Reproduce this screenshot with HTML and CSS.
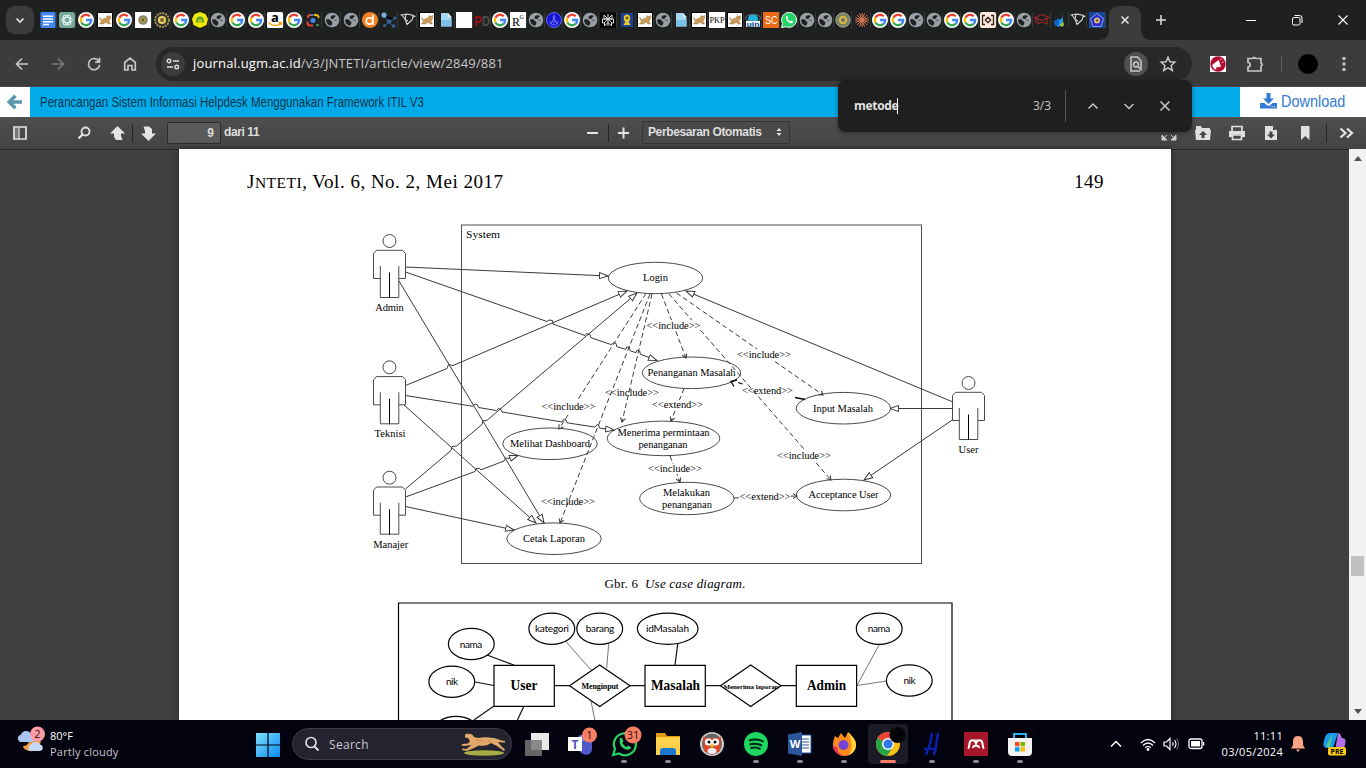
FILE: index.html
```html
<!DOCTYPE html>
<html lang="id">
<head>
<meta charset="utf-8">
<title>Perancangan Sistem Informasi Helpdesk</title>
<link rel="stylesheet" href="styles.css">
</head>
<body>
<svg class="defs" width="0" height="0">
  <defs>
    <symbol id="g" viewBox="0 0 16 16"><circle cx="8" cy="8" r="8" fill="#fff"/><g fill="none" stroke-width="2.300"><path d="M3.400 5.600A5.200 5.200 0 0 1 11.700 4.300" stroke="#ea4335"/><path d="M3.400 10.400A5.200 5.200 0 0 1 3.400 5.600" stroke="#fbbc05"/><path d="M11.500 11.900A5.200 5.200 0 0 1 3.400 10.400" stroke="#34a853"/><path d="M8 8h5.200A5.200 5.200 0 0 1 11.500 11.900" stroke="#4285f4"/></g></symbol>
    <symbol id="globe" viewBox="0 0 16 16"><circle cx="8" cy="8" r="7.300" fill="#9aa0a6"/><path d="M2.200 7.500C4 7 6 7.200 6.600 8.600c.3 1 1.800.7 1.800 2.200 0 1.200-.9 1.500-1 2.900C4 13.500 2 11 2.200 7.500zM6.500 5.500C6.500 3.500 9 2.300 12 3.800c-.2 1.200-1.600 1-1.900 2.200-.4 1.400-3.600 1.300-3.600-.5zM9.500 8.200c1.500-.9 3-.5 4.300.2" fill="#202124"/></symbol>
    <symbol id="cat" viewBox="0 0 16 16"><path d="M.5.500h15v15H.500z" fill="#fff" stroke="#000"/><path d="M2.500 5 4.500 8l2.500-1.500 2.500-.5.500-2.500 1 .800h1.500l1-.8.3 2.700-1.300 1.800-.5 1.500 1.500 2.500h-2.200l-1.800-1.500-2 .5-1 1H2.500l2-2.500L3.500 8z" fill="#c99b55" stroke="#8b6738" stroke-width=".4"/></symbol>
    <symbol id="file" viewBox="0 0 16 16"><path d="M3 1h7l3.500 4v9.500H3z" fill="#a5d6f2"/><path d="M3 8h10.500v6.500H3z" fill="#7cc0e6"/><path d="M10 1v4h3.500z" fill="#e3f4fd"/></symbol>
    <symbol id="bird" viewBox="0 0 16 16"><path d="M.5 3l3.500-.5 3-.5 6.500 1.500L12 8 7 12.500 5.500 8 2 3M6 2.500 5 7.500l3 1.500M13 5l2.500-1" fill="none" stroke="#ddd" stroke-width="1.100"/></symbol>
    <symbol id="docs" viewBox="0 0 16 16"><rect x=".5" width="15" height="16" rx="1.500" fill="#4285f4"/><path d="M3 4.200h10M3 7h10M3 9.700h10M3 12.400h6" stroke="#fff" stroke-width="1.500"/></symbol>
    <symbol id="gpt" viewBox="0 0 16 16"><rect width="16" height="16" rx="2.500" fill="#74aa9c"/><g fill="none" stroke="#e8f3f0" stroke-width=".9"><ellipse cx="8" cy="8" rx="5.400" ry="2.800"/><ellipse cx="8" cy="8" rx="5.400" ry="2.800" transform="rotate(60 8 8)"/><ellipse cx="8" cy="8" rx="5.400" ry="2.800" transform="rotate(120 8 8)"/></g></symbol>
    <symbol id="crest" viewBox="0 0 16 16"><path d="M0 0h16v16H0z" fill="#fff"/><circle cx="8" cy="8" r="4.800" fill="#8a8770"/><circle cx="8" cy="8" r="2.500" fill="#b59a3c"/><circle cx="8" cy="8" r="1" fill="#333"/></symbol>
    <symbol id="seal" viewBox="0 0 16 16"><circle cx="8" cy="8" r="7" fill="#3c382c" stroke="#b9a35c" stroke-width="1.600" stroke-dasharray="2 1"/><circle cx="8" cy="8" r="4" fill="#e9d36d"/><circle cx="8" cy="8" r="2" fill="#7a5c22"/></symbol>
    <symbol id="seal2" viewBox="0 0 16 16"><circle cx="8" cy="8" r="7.200" fill="#76806b" stroke="#a5a798"/><circle cx="8" cy="8" r="4.200" fill="#d6b83d"/><circle cx="8" cy="8" r="2" fill="#6b6d75"/></symbol>
    <symbol id="yellow" viewBox="0 0 16 16"><path d="M8 0l5.500 2L16 7l-1.500 6L8 16l-6.500-3L0 7l2.500-5z" fill="#f3e80b"/><path d="M4 10.500C4 6 6 4.500 8 4.500s4 1.500 4 6z" fill="#4b9b2b"/><path d="M6.500 10V8M8 10V6M9.500 10V8" stroke="#f3e80b"/></symbol>
    <symbol id="amazon" viewBox="0 0 16 16"><rect width="16" height="16" rx="1.500" fill="#fff"/><text x="8" y="9.500" class="fav-a">a</text><path d="M1.500 10.500c4 4 9 4 12.500.8M11.500 10.800l3-.3-.5 2.700" fill="none" stroke="#f90" stroke-width="1.200"/></symbol>
    <symbol id="lens" viewBox="0 0 16 16"><g fill="none" stroke-width="2"><path d="M3 6V5a2 2 0 0 1 2-2h1" stroke="#ea4335"/><path d="M2.500 9.500v1.500a2.500 2.500 0 0 0 2.500 2.500h3" stroke="#ea4335"/><path d="M6 3h2.500" stroke="#4285f4"/><path d="M9 3H11a2.500 2.500 0 0 1 2.500 3" stroke="#fbbc05"/></g><circle cx="8" cy="8.500" r="2.500" fill="#4285f4"/><circle cx="12.500" cy="13" r="1.300" fill="#34a853"/></symbol>
    <symbol id="dd" viewBox="0 0 16 16"><circle cx="8" cy="8" r="8" fill="#f58220"/><circle cx="7.500" cy="9" r="3.200" fill="none" stroke="#fff" stroke-width="1.500"/><path d="M11 2.500v10.500" stroke="#fff" stroke-width="1.500"/></symbol>
    <symbol id="mol" viewBox="0 0 16 16"><path d="M3 3.500l5 6 5.500-3M8 9.500l-4 4M8 9.500l4 4.500" stroke="#35679b" stroke-width="1"/><circle cx="3" cy="3" r="2.600" fill="#7fb0dd"/><circle cx="8" cy="9.500" r="2.300" fill="#35679b"/><circle cx="14" cy="6" r="1.600" fill="#35679b"/><circle cx="3.500" cy="13.500" r="1.500" fill="#35679b"/><circle cx="12.500" cy="14" r="1.700" fill="#35679b"/></symbol>
    <symbol id="white" viewBox="0 0 16 16"><path d="M0 0h16v16H0z" fill="#fff"/></symbol>
    <symbol id="pd" viewBox="0 0 16 16"><text x="0" y="14" class="fav-pd" textLength="8" lengthAdjust="spacingAndGlyphs" fill="#9b0e12">P</text><text x="8" y="14" class="fav-pd" textLength="8" lengthAdjust="spacingAndGlyphs" fill="#4d4d4d">D</text></symbol>
    <symbol id="rg" viewBox="0 0 16 16"><path d="M0 0h16v16H0z" fill="#fff"/><text x="2" y="14" class="fav-r">R</text><text x="9.500" y="7" class="fav-rg">G</text></symbol>
    <symbol id="anchor" viewBox="0 0 16 16"><circle cx="8" cy="8" r="7.500" fill="#1715cf" stroke="#5e6cf0"/><path d="M8 2.500v9M6.500 5h3M4 9c0 3 2 4 4 4s4-1 4-4M5 12l3-6 3 6" fill="none" stroke="#7c8cf5" stroke-width=".8"/></symbol>
    <symbol id="perp" viewBox="0 0 16 16"><path d="M0 0h16v16H0z" fill="#050505"/><path d="M8 2v12M4 3l4 4 4-4v4H4zM2.500 7h11v4H11.500M2.500 7v4H5M8 7l-3.500 3.500V14L8 10.500l3.500 3.500v-3.500z" fill="none" stroke="#ddd"/></symbol>
    <symbol id="scout" viewBox="0 0 16 16"><path d="M2 1h12v14H2z" fill="#1f3f9a"/><path d="M8 2.500c4 0 4 6 1.500 7l2 3.500h-7l2-3.500C4 8.500 4 2.500 8 2.500z" fill="#e8ce27"/><circle cx="8" cy="6" r="1.500" fill="#705415"/></symbol>
    <symbol id="pkp" viewBox="0 0 16 16"><path d="M0 0h16v16H0z" fill="#fff"/><text x=".5" y="10.500" class="fav-pkp" textLength="15" lengthAdjust="spacingAndGlyphs">PKP</text></symbol>
    <symbol id="uin" viewBox="0 0 16 16"><circle cx="8" cy="7" r="5" fill="#20b4dc"/><ellipse cx="8" cy="6" rx="7.500" ry="3.500" fill="none" stroke="#627179"/><path d="M1 9h14v6H1z" fill="#e9f6fb"/><text x="1.500" y="14.500" class="fav-uin" textLength="13" lengthAdjust="spacingAndGlyphs">uin</text></symbol>
    <symbol id="sc" viewBox="0 0 16 16"><path d="M0 0h16v16H0z" fill="#ec6a15"/><text x="2" y="12" class="fav-sc" textLength="12.500" lengthAdjust="spacingAndGlyphs">SC</text></symbol>
    <symbol id="wa" viewBox="0 0 16 16"><path d="M.5 15.500l1-4A7.500 7.500 0 1 1 5 14.700z" fill="#25d366" stroke="#fff"/><path d="M5 4l1.200-.2.900 2-.7 1c.7 1.200 1.500 2 2.800 2.600l1-.9 1.900 1-.1 1.100C10 13 4 9 5 4z" fill="#fff"/></symbol>
    <symbol id="claude" viewBox="0 0 16 16"><path d="M8 1v14M1 8h14M3 3l10 10M13 3 3 13M5.500 1.500l5 13M10.500 1.500l-5 13M1.500 5.500l13 5M1.500 10.500l13-5" stroke="#d97757" stroke-width="1"/></symbol>
    <symbol id="brk" viewBox="0 0 16 16"><rect width="16" height="16" rx="2" fill="#fbeadd"/><path d="M5 3.500H2.500v9H5M11 3.500h2.500v9H11M8 5.300l2.700 2.700L8 10.700 5.300 8z" fill="none" stroke="#35201c" stroke-width="1.300"/></symbol>
    <symbol id="cap" viewBox="0 0 16 16"><path d="M1 5.500 8 2.500l7 3-7 3zM4 7.500V12c3-2 6-2 9 0V7M1.500 6v5" fill="none" stroke="#a1292e" stroke-width="1.100"/></symbol>
    <symbol id="flame" viewBox="0 0 16 16"><path d="M10 0v6L3 11l3 4c4-1 5-4 5-6z" fill="#1aa0ea"/><path d="M2 9l5-3v7l-4 1z" fill="#1461c7"/><path d="M8 13l3-4 1 4-2 2z" fill="#a7c83b"/></symbol>
    <symbol id="penta" viewBox="0 0 16 16"><path d="M0 0h16v16H0z" fill="#15489c"/><path d="M8 1.500 14.500 6.500 12 14.500H4L1.500 6.500z" fill="#2b28d8" stroke="#b7b6de" stroke-width=".8"/><circle cx="8" cy="8.500" r="3" fill="#d9c66e"/><circle cx="8" cy="8.500" r="1.300" fill="#8c4b35"/></symbol>
    <g id="actor" fill="none" stroke="#4a4a4a" stroke-width="1"><circle cx="389.500" cy="241" r="6.500"/><path d="M380 278.500h-6.500V253.500l3-3.200h26l3 3.200v25H399M380.300 266v31.500h18.500V266"/><path d="M389.500 272.500V298" stroke="#000"/></g>
    <marker id="tri" markerUnits="userSpaceOnUse" markerWidth="12" markerHeight="10" refX="9" refY="4" orient="auto"><path d="M.5 1v6L9 4z" fill="#fff" stroke="#3a3a3a" stroke-width="1"/></marker>
    <marker id="open" markerUnits="userSpaceOnUse" markerWidth="8" markerHeight="8" refX="5" refY="3" orient="auto"><path d="M1 .5 5 3 1 5.500" fill="none" stroke="#3a3a3a"/></marker>
  </defs>
</svg>

<header class="tabs">
  <div class="tab-search"><svg width="10" height="7" viewBox="0 0 10 7"><path d="M1.500 1.500 5 5l3.500-3.500" fill="none" stroke="#e3e3e3" stroke-width="1.600"/></svg></div>
  <div class="favs favs-a">
    <svg><use href="#docs"/></svg><svg><use href="#gpt"/></svg><svg><use href="#g"/></svg><svg><use href="#cat"/></svg><svg><use href="#g"/></svg><svg><use href="#crest"/></svg><svg><use href="#seal"/></svg><svg><use href="#g"/></svg><svg><use href="#yellow"/></svg><svg><use href="#globe"/></svg><svg><use href="#g"/></svg><svg><use href="#g"/></svg><svg><use href="#amazon"/></svg><svg><use href="#g"/></svg><svg><use href="#lens"/></svg><svg><use href="#globe"/></svg><svg><use href="#globe"/></svg><svg><use href="#dd"/></svg><svg><use href="#mol"/></svg><svg><use href="#bird"/></svg><svg><use href="#cat"/></svg>
  </div>
  <div class="favs favs-b">
    <svg><use href="#file"/></svg><svg><use href="#white"/></svg><svg><use href="#pd"/></svg><svg><use href="#g"/></svg><svg><use href="#rg"/></svg><svg><use href="#globe"/></svg><svg><use href="#anchor"/></svg><svg><use href="#g"/></svg><svg><use href="#globe"/></svg><svg><use href="#perp"/></svg><svg><use href="#scout"/></svg><svg><use href="#cat"/></svg><svg><use href="#globe"/></svg><svg><use href="#file"/></svg><svg><use href="#cat"/></svg><svg><use href="#pkp"/></svg><svg><use href="#cat"/></svg><svg><use href="#uin"/></svg><svg><use href="#sc"/></svg><svg><use href="#wa"/></svg><svg><use href="#globe"/></svg><svg><use href="#globe"/></svg><svg><use href="#seal2"/></svg><svg><use href="#claude"/></svg><svg><use href="#g"/></svg><svg><use href="#g"/></svg><svg><use href="#globe"/></svg><svg><use href="#globe"/></svg><svg><use href="#g"/></svg><svg><use href="#g"/></svg><svg><use href="#brk"/></svg><svg><use href="#g"/></svg><svg><use href="#globe"/></svg><svg><use href="#cap"/></svg><svg><use href="#flame"/></svg><svg><use href="#bird"/></svg><svg><use href="#penta"/></svg>
  </div>
  <svg class="active-tab" width="52" height="34" viewBox="0 0 52 34"><path d="M0 34c6 0 10-4 10-10V10C10 4 14 0 20 0h12c6 0 10 4 10 10v14c0 6 4 10 10 10z" fill="#3c3c3c"/><path d="M22.500 10.500l7 7m0-7-7 7" stroke="#e8e8e8" stroke-width="1.500"/></svg>
  <svg class="new-tab" width="12" height="12"><path d="M6 1v10M1 6h10" stroke="#ddd" stroke-width="1.500"/></svg>
  <div class="win">
    <svg width="12" height="12"><path d="M1 6.500h10" stroke="#fff"/></svg>
    <svg width="12" height="12"><rect x="1.500" y="3.500" width="7.500" height="7.500" rx="1.500" fill="none" stroke="#fff"/><path d="M3.500 1.500h5a2.500 2.500 0 0 1 2.500 2.500v5" fill="none" stroke="#fff"/></svg>
    <svg width="12" height="12"><path d="M1.500 1.500l9 9m0-9-9 9" stroke="#fff" stroke-width="1.100"/></svg>
  </div>
</header>

<div class="chrome">
  <div class="nav">
    <svg viewBox="0 0 16 16"><path d="M14 8H3M8 2.500 2.500 8 8 13.500" stroke="#c7c7c7"/></svg>
    <svg viewBox="0 0 16 16"><path d="M2 8h11M8 2.500 13.500 8 8 13.500" stroke="#7a7a7a"/></svg>
    <svg viewBox="0 0 16 16"><path d="M13 5.500A5.600 5.600 0 1 0 13.600 8.800M13.500 1.800v4.400H9.200" stroke="#c7c7c7"/></svg>
    <svg viewBox="0 0 16 16"><path d="M2.700 14V6.500L8 2.200l5.300 4.300V14H10V9.500H6V14z" stroke="#c7c7c7"/></svg>
  </div>
  <div class="omnibox">
    <span class="round"><svg width="14" height="14" viewBox="0 0 14 14"><path d="M7 4h6M1 10h6" stroke="#ddd" stroke-width="1.500"/><circle cx="3" cy="4" r="1.800" fill="none" stroke="#ddd" stroke-width="1.400"/><circle cx="10.700" cy="10" r="1.800" fill="none" stroke="#ddd" stroke-width="1.400"/></svg></span>
    <span class="url"><b>journal.ugm.ac.id</b>/v3/JNTETI/article/view/2849/881</span>
    <span class="round round-find"><svg width="16" height="18" viewBox="0 0 16 18"><path d="M13 15.500V6L9.500 2H3v14h9" fill="none" stroke="#c7c7c7" stroke-width="1.500"/><circle cx="8" cy="9.500" r="2.500" fill="none" stroke="#c7c7c7" stroke-width="1.400"/><path d="M10 11.500l3 3" stroke="#c7c7c7" stroke-width="1.400"/></svg></span>
    <svg class="star" width="16" height="16" viewBox="0 0 16 16"><path d="M8 1.200l1.900 4.600 5 .4-3.800 3.300 1.200 4.900L8 11.800l-4.300 2.600 1.200-4.900L1.100 6.200l5-.4z" fill="none" stroke="#c7c7c7" stroke-width="1.500"/></svg>
  </div>
  <svg class="ext" width="16" height="16"><path d="M0 0h16v16H0z" fill="#fff"/><circle cx="8" cy="8" r="7.700" fill="#b30d34"/><path d="M2.500 9 8.500 4.500l2 6-5 .5.500 2H4.500zM10.500 4l1-1.500M12 6.500l1.500-.5" fill="#fff" stroke="#fff" stroke-width=".8"/></svg>
  <svg class="puzzle" width="18" height="18" viewBox="0 0 18 18"><path d="M2 3.500h4.500a1.700 1.700 0 0 1 3 0H15V8a1.700 1.700 0 0 1 0 3.200V16H2v-4c3 0 3-4.500 0-4.500z" fill="none" stroke="#c7c7c7" stroke-width="1.700"/></svg>
  <i class="vsep"></i><i class="avatar"></i>
  <svg class="dots" width="4" height="16"><g fill="#c7c7c7"><circle cx="2" cy="2.500" r="1.700"/><circle cx="2" cy="8" r="1.700"/><circle cx="2" cy="13.500" r="1.700"/></g></svg>
</div>

<div class="find">
  <span class="find-q">metode</span><i class="caret"></i><span class="find-n">3/3</span><i class="find-sep"></i>
  <svg width="12" height="12"><path d="M1.500 8.500 6 4l4.500 4.500" /></svg>
  <svg width="12" height="12"><path d="M1.500 4 6 8.500 10.500 4"/></svg>
  <svg width="12" height="12"><path d="M1.500 1.500l9 9m0-9-9 9"/></svg>
</div>

<div class="article">
  <div class="art-back"><svg width="18" height="16" viewBox="0 0 18 16"><path d="M16 8H4M9.500 1.800 3.200 8l6.300 6.200" fill="none" stroke="#5a97ad" stroke-width="3.400"/></svg></div>
  <div class="art-title"><span>Perancangan Sistem Informasi Helpdesk Menggunakan Framework ITIL V3</span></div>
  <div class="art-dl"><svg width="17" height="16" viewBox="0 0 17 16"><path d="M6.500 0h4v5.500h3.500l-5.500 5.500L3 5.500h3.500z" fill="#337bd8"/><path d="M0 10h4.500l3 2.700h2l3-2.700H17v5.500H0z" fill="#337bd8"/><path d="M11.500 13.700h1M14 13.700h1" stroke="#fff"/></svg><span>Download</span></div>
</div>

<div class="pdfbar">
  <svg class="p-side" width="14" height="14"><path d="M1 1h12v12H1z" fill="none" stroke="#e4e4e4" stroke-width="1.700"/><path d="M2 2h3.500v10H2z" fill="#777"/><path d="M6 1v12" stroke="#e4e4e4" stroke-width="1.200"/></svg>
  <svg class="p-search" width="14" height="14"><circle cx="8.500" cy="5.500" r="4" fill="none" stroke="#e4e4e4" stroke-width="1.800"/><path d="M5.500 8.500 1.500 12.500" stroke="#e4e4e4" stroke-width="2.400"/></svg>
  <svg class="p-up" width="15" height="15"><path d="M7.500 0 15 7.500h-4V10l1.500 4H6L4 11V7.500H0z" fill="#e4e4e4"/></svg>
  <i class="p-sep p-sep1"></i>
  <svg class="p-down" width="15" height="15"><path d="M7.500 15 0 7.500h4V5L2.500.500H8L11 3v4.500h4z" fill="#e4e4e4"/></svg>
  <div class="page-no">9</div><span class="page-of">dari 11</span>
  <svg class="p-minus" width="11" height="12"><path d="M0 6h11" stroke="#e4e4e4" stroke-width="2"/></svg>
  <i class="p-sep p-sep2"></i>
  <svg class="p-plus" width="11" height="12"><path d="M0 6h11M5.500 .5v11" stroke="#e4e4e4" stroke-width="2"/></svg>
  <div class="zoom"><span>Perbesaran Otomatis</span><svg width="6" height="8"><path d="M3 0l2.500 3h-5zM3 8 .5 5h5z" fill="#e4e4e4"/></svg></div>
  <div class="p-right">
    <svg width="16" height="16"><path d="M1 15v-5l5 5zM15 15v-5l-5 5zM2.500 13.500 6 10M13.500 13.500 10 10" fill="#ccc" stroke="#ccc"/></svg>
    <svg width="16" height="16"><path d="M1 1h5l1 2h8v3H1zM0 5h16l-1 10H1z" fill="#e0e0e0"/><path d="M8 6l4 4H9.500v3h-3v-3H4z" fill="#444"/></svg>
    <svg width="16" height="16"><path d="M3 6V1.500h10V6M3.500 10h9v4.500h-9z" fill="none" stroke="#e0e0e0" stroke-width="1.700"/><path d="M0 6h16v6h-3V9.500H3V12H0z" fill="#e0e0e0"/></svg>
    <svg width="16" height="16"><path d="M2 1h8l4 4v10H2z" fill="#e0e0e0"/><path d="M10 1v4h4M8 13.500 4 9.500h2.500v-3h3v3H12z" fill="#444"/></svg>
    <svg width="16" height="16"><path d="M4 1h8.500v14L8.200 11 4 15z" fill="#e0e0e0"/></svg>
  </div>
  <i class="p-sep p-sep3"></i>
  <svg class="p-more" width="15" height="12"><path d="M1.500 1.500 6.500 6l-5 4.500M8 1.500 13 6l-5 4.500" fill="none" stroke="#e4e4e4" stroke-width="2.200"/></svg>
</div>

<main class="viewer">
  <section class="paper">
    <div class="run-head"><span class="journal">J<small>NTETI</small>, Vol. 6, No. 2, Mei 2017</span><span class="folio">149</span></div>
    <svg class="usecase" width="992" height="370" viewBox="179 205 992 370">
      <rect x="461.500" y="225" width="460" height="338.500" fill="none" stroke="#4d4d4d"/>
      <g fill="#fff" stroke="#4a4a4a">
        <ellipse cx="655.500" cy="278" rx="47.200" ry="15.700"/><ellipse cx="691.500" cy="372.800" rx="49.200" ry="15.800"/><ellipse cx="663.500" cy="438.400" rx="56.300" ry="17.300"/><ellipse cx="843.400" cy="408.200" rx="47.200" ry="15.800"/><ellipse cx="686.800" cy="498.500" rx="47.200" ry="16.200"/><ellipse cx="843.500" cy="495" rx="47.200" ry="15.800"/><ellipse cx="550" cy="443.800" rx="47.200" ry="15.800"/><ellipse cx="554" cy="538.700" rx="47.200" ry="15.800"/>
      </g>
      <use href="#actor"/><use href="#actor" y="126.300"/><use href="#actor" y="236.700"/><use href="#actor" x="579" y="142"/>
      <g class="dash">
        <path d="M646 293.500 559 429"/><path d="M650 294 560 523"/><path d="M652 294 622 422"/><path d="M661.500 294 686 358"/><path d="M669 294 831 480"/><path d="M676.500 293 823 395"/><path d="M684 388.500 671 421"/><path d="M670 456 680 482"/><path d="M734 498 797 496"/>
      </g>
      <path d="M805 399.500 795 397.500M742.500 384 738 382.500M737 380 731 381.500 734 386.500" fill="none" stroke="#000" stroke-width="1.300"/>
      <g class="solid">
        <path d="M405.500 267 608 276"/>
        <path d="M405.500 272 547 321.500l2-1.500 3.500.5.500 3.500L585 335.500l1.500-2 3.500 1 .8 3.200 20.700 7 2-2 2.500.7.800 3.300 9 2.700 1-2.500 2.700.500.500 3.300 6 2 1-2.500 2.800 1 .5 3L657 360.500"/>
        <path d="M399 281 544 523"/><path d="M405.500 385.500 447 368.500l1.500-4 4.500 1L627 291"/>
        <path d="M405.500 395.500l67.500 10.800 2-2.300 2.500 1 1 2.500 18 3 2-2 2.500 1 1 2.500L562 422l1.500-2.500 2.500.500 1 2.800 28 4.300 2-2.500 2 1 .5 2.500L614 430"/>
        <path d="M405.500 489 451 450.500l1-4 4.500-.5L482 424.500l1-3.500 4-.7L637 293"/>
        <path d="M405.500 497 475 471.500l1-3 3-.2 2 1.500L504 461l1.500-3 4 .5L518 455.500"/>
        <path d="M404 405 536 523"/><path d="M405.500 506.500 514 530"/>
        <path d="M953 402 686 291"/><path d="M953 408.500H890"/><path d="M953 419.500 864 480"/>
      </g>
      <g fill="#fff"><path d="M646 320h54v11h-54zM738 349h53v11h-53zM542 401h53v11h-53zM652 400h51v10h-51zM777 450h54v11h-54zM648 464h54v10h-54zM739 491h52v11h-52z"/></g>
      <g class="lbl">
        <text x="673.500" y="329" textLength="54">&lt;&lt;include&gt;&gt;</text><text x="764" y="358" textLength="54">&lt;&lt;include&gt;&gt;</text><text x="568.500" y="410" textLength="54">&lt;&lt;include&gt;&gt;</text><text x="632" y="396" textLength="54">&lt;&lt;include&gt;&gt;</text><text x="568" y="505" textLength="54">&lt;&lt;include&gt;&gt;</text><text x="804" y="459" textLength="54">&lt;&lt;include&gt;&gt;</text><text x="675" y="472" textLength="54">&lt;&lt;include&gt;&gt;</text><text x="767.500" y="394" textLength="51">&lt;&lt;extend&gt;&gt;</text><text x="677.500" y="408" textLength="51">&lt;&lt;extend&gt;&gt;</text><text x="765" y="500" textLength="51">&lt;&lt;extend&gt;&gt;</text>
        <text x="483" y="238" textLength="34" lengthAdjust="spacingAndGlyphs">System</text><text x="655.500" y="281" textLength="25">Login</text><text x="691.500" y="376" textLength="88">Penanganan Masalah</text><text x="663.500" y="435.500" textLength="92">Menerima permintaan</text><text x="663" y="448" textLength="49">penanganan</text><text x="843" y="411.500" textLength="60">Input Masalah</text><text x="686.500" y="496" textLength="47">Melakukan</text><text x="687" y="508" textLength="50">penanganan</text><text x="843.500" y="498" textLength="70">Acceptance User</text><text x="550" y="447" textLength="80">Melihat Dashboard</text><text x="554" y="542" textLength="62">Cetak Laporan</text>
        <text x="389.500" y="311" textLength="28.500">Admin</text><text x="390" y="437" textLength="31">Teknisi</text><text x="390.700" y="548" textLength="35">Manajer</text><text x="968.500" y="453" textLength="20">User</text>
      </g>
    </svg>
    <div class="caption">Gbr. 6&nbsp; <em>Use case diagram</em>.</div>
    <svg class="erd" width="992" height="122" viewBox="179 598 992 122">
      <g stroke="#111" stroke-width="1.200"><path d="M487 655 514 665M475 682 494 685.500M494 706 474 720M524 706 517 721M677.700 644 675 665M554 685.700H570M630 685.700H645M705 685.700H721M781 685.700H796"/></g>
      <g stroke="#777"><path d="M565.500 641 591 670M608.700 644 606.700 668M591 701 595 721M879 645 857 685.500 886.500 681" fill="none"/></g>
      <g fill="#fff" stroke="#000" stroke-width="1.200">
        <path d="M398.500 740V603H952V740" fill="none"/>
        <ellipse cx="471.300" cy="644" rx="22.900" ry="15.600"/><ellipse cx="451.800" cy="681.700" rx="22.900" ry="15.600"/><ellipse cx="551.800" cy="628.700" rx="22.900" ry="15.600"/><ellipse cx="599.700" cy="628.700" rx="22.900" ry="15.600"/><ellipse cx="667.700" cy="628.700" rx="30.300" ry="15.600"/><ellipse cx="879.200" cy="628.700" rx="22.900" ry="15.600"/><ellipse cx="909.300" cy="680.500" rx="22.900" ry="15.600"/><ellipse cx="456" cy="732" rx="22.900" ry="15.600"/>
        <path d="M494 665.300h60.300v41H494zM645 665.300h60.300v41H645zM796.300 665.300h60.300v41h-60.300zM569.500 685.700 599.700 665l30.300 20.700-30.300 20.700zM720.500 685.700 750.700 665 781 685.700l-30.300 20.700z"/>
      </g>
      <g class="attr"><text x="471" y="647.500" textLength="22.500">nama</text><text x="452" y="685" textLength="12">nik</text><text x="552" y="632" textLength="34">kategori</text><text x="600" y="632" textLength="28.500">barang</text><text x="667.500" y="632" textLength="43">idMasalah</text><text x="879" y="632" textLength="22.500">nama</text><text x="909.500" y="684" textLength="12">nik</text></g>
      <g class="ent"><text x="524" y="690" textLength="27" lengthAdjust="spacingAndGlyphs">User</text><text x="675.500" y="690" textLength="49" lengthAdjust="spacingAndGlyphs">Masalah</text><text x="826.500" y="690" textLength="39" lengthAdjust="spacingAndGlyphs">Admin</text></g>
      <g class="rel"><text x="600" y="688.500" textLength="37">Menginput</text><text x="751" y="688.500" textLength="55" class="rel-s">Menerima laporan</text></g>
    </svg>
  </section>
  <div class="scroll"><svg width="8" height="5"><path d="M4 0l4 5H0z" fill="#505050"/></svg><i></i><svg width="8" height="5"><path d="M4 5l4-5H0z" fill="#505050"/></svg></div>
</main>

<footer class="taskbar">
  <div class="weather">
    <svg width="28" height="32" viewBox="0 0 28 32"><path d="M12 10c3 6 8 4 12 4 0 9-6 13-12 12-4-1-6-3-6-5 5 0 8-5 6-11z" fill="#f19a3c"/><path d="M3 17a4 4 0 0 1 1-7.500A5.500 5.500 0 0 1 14 9a4 4 0 0 1 0 8z" fill="#a9c4f2"/><path d="M13 26a3.500 3.500 0 0 1 1-6.500 5 5 0 0 1 9 0 3.300 3.300 0 0 1 0 6.500z" fill="#c5d8f8"/><circle cx="20.500" cy="9" r="7.500" fill="#ff9ba5"/><text x="20.500" y="13" class="badge">2</text></svg>
    <div><div class="w-t">80°F</div><div class="w-s">Partly cloudy</div></div>
  </div>
  <svg class="start" width="24" height="24"><defs><linearGradient id="win" x1="0" y1="0" x2="1" y2="1"><stop stop-color="#7be0ff"/><stop offset="1" stop-color="#0d8cf0"/></linearGradient></defs><path d="M0 0h11.400v11.400H0zM12.600 0H24v11.400H12.600zM0 12.600h11.400V24H0zM12.600 12.600H24V24H12.600z" fill="url(#win)"/></svg>
  <div class="search">
    <svg width="16" height="16"><circle cx="7" cy="6.500" r="5" fill="none" stroke="#ddd" stroke-width="1.700"/><path d="M10.500 10.500l4 4" stroke="#ddd" stroke-width="2"/></svg>
    <span>Search</span>
    <svg width="46" height="24" viewBox="0 0 46 24"><ellipse cx="24" cy="21" rx="20" ry="2.800" fill="#a5ad42"/><path d="M5 4c0-3 2-3 3-2 3-1 5 1 6 3l4 1c5-1 10-1 15 0 4 0 7 3 12 3v1.500c-4 0-6-.5-7-.5l3 4 4 3.500-1 1.500-7-5-6-3c-4 3-8 3-12 2.500l-5 2.500-7 3-5-1 .500-1.500 4 .5 5-4-7 1-3-.5.500-1.500 6-.5 2-2.500-2-3-3-.5z" fill="#e3a96a"/><path d="M17 8l2 1 3-1 3 2 4-1 4 2" stroke="#99602f" stroke-dasharray="1 2" fill="none"/></svg>
  </div>
  <div class="apps">
    <div class="app"><svg><path d="M7 1h18v17H7z" fill="#e8e8e8"/><path d="M1 8h17v16H1z" fill="#777" opacity=".85"/></svg></div>
    <div class="app"><svg><circle cx="14" cy="7" r="4" fill="#7b83eb"/><path d="M9 9h15v8c0 7-10 8-13 1z" fill="#5059c9"/><path d="M0 5h14v14H0z" fill="#fff"/><text x="7" y="16.500" class="a-t">T</text><circle cx="21.500" cy="3" r="7.500" fill="#f87f64"/><text x="21.500" y="7" class="badge">1</text></svg></div>
    <div class="app run"><svg><path d="M1 23l2-6A11 11 0 1 1 7 21.500z" fill="#03020f" stroke="#27d366" stroke-width="2.200"/><path d="M8 6l2 0 1.500 3-1 2c1 2 2.500 3 4 4l1.500-1.500 3 1.500c0 6-14 2-11-9z" fill="#27d366"/><circle cx="21" cy="3" r="8.500" fill="#f87f64"/><text x="21" y="7" class="badge">31</text></svg></div>
    <div class="app run"><svg><path d="M0 1h9l2 3h13v18H0z" fill="#e09a0c"/><path d="M0 5h24v18H0z" fill="#ffd04c"/><path d="M4 23v-4q0-3 3-3h10q3 0 3 3v4z" fill="#1b78d0"/></svg></div>
    <div class="app"><svg><ellipse cx="12" cy="12" rx="12" ry="12" fill="#cfcfcf"/><ellipse cx="12" cy="12" rx="10" ry="10.500" fill="#666"/><path d="M3 5l5 1h8l5-1-1 14-8 4-8-4z" fill="#d84a2b"/><circle cx="8.500" cy="10" r="3.600" fill="#fff"/><circle cx="15.500" cy="10" r="3.600" fill="#fff"/><circle cx="9" cy="10" r="1.500"/><circle cx="15" cy="10" r="1.500"/><path d="M12 11l2 3-2 2-2-2z" fill="#f4ba36"/><ellipse cx="12" cy="19" rx="4.500" ry="3" fill="#eee"/></svg></div>
    <div class="app run"><svg><circle cx="12" cy="12" r="12" fill="#1ed760"/><path d="M5 8.500q8-2.500 14.500 1.200M5.500 12.500q7-2 12.500 1.200M6.500 16.200q6-1.700 10 1" fill="none" stroke="#06240f" stroke-width="2"/></svg></div>
    <div class="app run"><svg><path d="M12 3h11v18H12z" fill="#fff" stroke="#2b5797"/><path d="M14 7h7M14 10h7M14 13h7M14 16h7" stroke="#2b5797"/><path d="M0 2.500 14 0v24L0 21.500z" fill="#2b579a"/><text x="7" y="16" class="a-w">W</text></svg></div>
    <div class="app run"><svg><path d="M3 4l3 2 3-5 4 5 3-6c5 5 8 8 8 13a11.500 11 0 0 1-23 0c0-4 1-6 2-9z" fill="#ff8a1c"/><path d="M16 0c5 5 8 8 8 13a11.500 11 0 0 1-7 10c5-8 2-16-1-23z" fill="#ffd438"/><path d="M1 14c1 8 8 10 12 10-6-1-8-5-8-9z" fill="#f1285f"/><circle cx="11.500" cy="13" r="5" fill="#7542d8"/></svg></div>
    <div class="app run active"><svg><circle cx="12" cy="12" r="12" fill="#fbc116"/><path d="M12 12 1.600 6A12 12 0 0 1 22.400 6z" fill="#ea4335"/><path d="M1.600 6A12 12 0 0 0 11 24l6-9-5-3z" fill="#27a348"/><circle cx="12" cy="12" r="6" fill="#fff"/><circle cx="12" cy="12" r="4.600" fill="#2e78e8"/><circle cx="21.500" cy="3" r="8" fill="#050507"/></svg></div>
    <div class="app run"><svg><path d="M12 1c-1 9-2 13-6 22M18 1c-1 9-2 13-4 22M4 17h13" fill="none" stroke="#0b1fae" stroke-width="2.400"/></svg></div>
    <div class="app run"><svg><path d="M0 0h24v24H0z" fill="#a8162c"/><path d="M4 16.500c2.500-2 0-7 3.500-8S12 11 12 11s1-3.500 4.500-2.500 1 6 3.500 8M9 16q0-2.500 3-2.500t3 2.500" fill="none" stroke="#fff" stroke-width="2"/><circle cx="12" cy="9.500" r="2" fill="#fff"/></svg></div>
    <div class="app run"><svg><path d="M6 7V2h12v5" fill="none" stroke="#28b3ed" stroke-width="2"/><path d="M0 6h24v14q0 4-4 4H4q-4 0-4-4z" fill="#f2f2f2"/><path d="M7 10h4.500v4.300H7z" fill="#f25022"/><path d="M12.500 10H17v4.300h-4.500z" fill="#7fba00"/><path d="M7 15.200h4.500v4.300H7z" fill="#00a4ef"/><path d="M12.500 15.200H17v4.300h-4.500z" fill="#ffb900"/></svg></div>
  </div>
  <div class="tray">
    <svg class="t-up" width="12" height="8"><path d="M1 6.500 6 1.500l5 5" fill="none" stroke="#fff" stroke-width="1.500"/></svg>
    <svg class="t-wifi" width="16" height="13"><path d="M1 5Q8-2 15 5M3 7.500q5-5 10 0M5.200 9.700q2.800-2.800 5.600 0" fill="none" stroke="#fff" stroke-width="1.300"/><circle cx="8" cy="11.500" r="1.400" fill="#fff"/></svg>
    <svg class="t-vol" width="16" height="14"><path d="M1 5h2.500L7 1.500v11L3.500 9H1z" fill="none" stroke="#fff" stroke-width="1.200"/><path d="M9.500 5q1.500 2 0 4M11.500 3q3 4 0 8" fill="none" stroke="#fff" stroke-width="1.200"/><path d="M13.500 1.500q4 5.500 0 11" fill="none" stroke="#777"/></svg>
    <svg class="t-bat" width="17" height="12"><rect x="1" y="1" width="13" height="9.500" rx="2" fill="none" stroke="#fff" stroke-width="1.300"/><path d="M3 3h9v5.500H3z" fill="#fff"/><path d="M15.500 4v3.500" stroke="#fff" stroke-width="1.500"/></svg>
    <div class="clock"><div>11:11</div><div>03/05/2024</div></div>
    <svg class="t-bell" width="14" height="16"><path d="M7 0c4 0 5 3 5 6v3l2 3.500H0L2 9V6c0-3 1-6 5-6zM5 13.500h4L7 16z" fill="#ffa487"/></svg>
    <svg class="t-cop" width="24" height="24"><path d="M7 1h8l-5 15H4c-4 0-4-4-3-7 1-4 2-8 6-8z" fill="#1a9bea"/><path d="M3 14 9 2l-2 14z" fill="#53c987"/><path d="M15 1c3 0 3 4 4 5 4 0 4 3 3 7l-2 6h-8z" fill="#b46de8"/><rect x="5" y="15" width="18" height="8.500" rx="2" fill="#ffca16"/><text x="14" y="22" class="pre">PRE</text></svg>
  </div>
</footer>
</body>
</html>
```
FILE: styles.css
```css
* { box-sizing: border-box; }
body { margin: 0; width: 1366px; height: 768px; overflow: hidden; position: relative; background: #404040; font-family: "Open Sans", "Noto Sans", sans-serif; display: flex; flex-direction: column; }
svg { display: block; flex: none; overflow: visible; }
.defs { position: absolute; }
i { display: block; flex: none; }

/* tab strip */
.tabs { height: 40px; flex: none; background: #1f2120; display: flex; align-items: center; }
.tab-search { width: 28px; height: 28px; margin-left: 6px; border-radius: 9px; background: #3c3c3c; display: flex; align-items: center; justify-content: center; }
.favs { display: flex; flex: none; }
.favs svg { width: 16px; height: 16px; box-shadow: 1px 0 #353636; }
.favs-a { gap: 2.95px; margin-left: 6px; }
.favs-b { gap: 2.080px; margin-left: 3px; }
.fav-a { font: bold 13px "Open Sans", sans-serif; text-anchor: middle; }
.fav-pd { font: bold 15px "Liberation Sans", sans-serif; }
.fav-r { font: 12px "Liberation Serif", serif; }
.fav-rg { font: 6px "Liberation Serif", serif; }
.fav-pkp { font: 8px "Liberation Serif", serif; }
.fav-uin { font: bold 8px "Liberation Sans", sans-serif; fill: #0e4d8e; }
.fav-sc { font: 10px "Liberation Sans", sans-serif; fill: #fff; }
.active-tab { margin: 6px 0 0 -6px; }
.new-tab { margin-left: 4px; }
.win { display: flex; gap: 34px; margin-left: 78px; }

/* browser toolbar */
.chrome { height: 47px; flex: none; background: #3c3c3c; display: flex; align-items: center; box-shadow: inset 0 -1px #484848; }
.nav { display: flex; gap: 20px; margin-left: 14px; flex: none; }
.nav svg { width: 16px; height: 16px; fill: none; stroke-width: 1.700; }
.omnibox { width: 1036px; height: 34px; margin-left: 18px; border-radius: 17px; background: #282828; display: flex; align-items: center; flex: none; }
.round { width: 24px; height: 24px; border-radius: 50%; background: #3c3c3c; margin-left: 5px; display: flex; align-items: center; justify-content: center; flex: none; }
.url { width: 930px; margin: -2px 0 0 8px; font-size: 13px; color: #c7c7c7; white-space: nowrap; letter-spacing: .17px; }
.url b { font-weight: 400; color: #fff; }
.round-find { background: #505050; margin-left: 1px; }
.star { margin-left: 12px; }
.ext { margin-left: 18px; }
.puzzle { margin-left: 20px; }
.vsep { width: 1px; height: 16px; background: #606060; margin-left: 17px; }
.avatar { width: 20px; height: 20px; border-radius: 50%; background: #000; margin-left: 16px; }
.dots { margin-left: 24px; }

/* find-in-page popup */
.find { position: absolute; left: 838px; top: 80px; width: 354px; height: 52px; background: #1f1f1f; border-radius: 8px; display: flex; align-items: center; padding-left: 16px; color: #e3e3e3; font-size: 12px; z-index: 3; box-shadow: 0 1px 5px rgba(0,0,0,.4); }
.find-q { font-weight: 700; width: 43px; letter-spacing: -.3px; margin-top: -1px; }
.caret { width: 1px; height: 16px; background: #fff; }
.find-n { margin: -1px 0 0 135px; width: 20px; color: #c7c7c7; }
.find-sep { width: 1px; height: 32px; background: #555; margin: 0 20px 0 14px; }
.find-n + .find-sep { margin-left: 14px; }
.find svg { position: relative; left: 1px; margin-right: 24px; fill: none; stroke: #c7c7c7; stroke-width: 1.500; }

/* article bar */
.article { height: 30px; flex: none; background: #03abea; display: flex; font-family: "Liberation Sans", Arial, sans-serif; }
.art-back { width: 30px; background: #fff; display: flex; align-items: center; justify-content: center; }
.art-title { width: 1210px; padding-left: 10px; font-size: 14px; line-height: 31px; color: #06354a; white-space: nowrap; }
.art-title span { display: inline-block; transform: scaleX(.819); transform-origin: 0 50%; }
.art-dl { width: 126px; background: #fff; display: flex; align-items: center; padding-left: 20px; color: #337bd8; font-size: 17px; }
.art-dl svg { margin-top: -3px; }
.art-dl span { margin-left: 4px; transform: scaleX(.85); transform-origin: 0 50%; }

/* pdf toolbar */
.pdfbar { height: 32px; flex: none; background: linear-gradient(#4f4f4f, #434343); display: flex; align-items: center; font: bold 12px "Liberation Sans", Arial, sans-serif; color: #dedede; }
.p-side { margin-left: 13px; }
.p-search { margin-left: 50px; }
.p-up { margin-left: 19px; }
.p-sep { width: 1px; height: 18px; background: #272727; }
.p-sep1 { margin: 0 8px 0 7px; }
.page-no { width: 54px; height: 22px; margin: -1px 0 0 11px; border: 1px solid #2b2b2b; border-radius: 2px; background: #5a5a5a; text-align: right; padding: 3px 6px 0 0; line-height: 14px; }
.page-of { margin: -2px 0 0 3px; width: 38px; white-space: nowrap; letter-spacing: -.4px; }
.p-minus { margin-left: 325px; }
.p-sep2 { margin: 0 9px 0 10px; }
.zoom { width: 148px; height: 23px; margin: -1px 0 0 13px; border: 1px solid #333; border-radius: 2px; background: #494949; display: flex; align-items: center; justify-content: space-between; padding: 0 7px 1px 5px; }
.zoom span { white-space: nowrap; letter-spacing: -.38px; }
.p-right { display: flex; gap: 18px; margin-left: 371px; }
.p-sep3 { margin: 0 12px 0 13px; }

/* document */
.viewer { height: 571px; flex: none; background: #404040; display: flex; box-shadow: inset 0 1px #252525; }
.paper { width: 992px; height: 571px; margin-left: 179px; background: #fff; display: flex; flex-direction: column; font-family: "Liberation Serif", "Times New Roman", serif; color: #000; overflow: hidden; box-shadow: 0 0 5px #222; }
.run-head { height: 56px; flex: none; display: flex; justify-content: space-between; padding: 22px 67px 0 68px; font-size: 19px; line-height: 22px; }
.journal { letter-spacing: .5px; }
.folio { letter-spacing: .5px; }
.run-head small { font-size: 15.500px; }
.caption { height: 23px; flex: none; line-height: 18px; font-size: 13px; letter-spacing: .2px; text-align: center; }
.dash path { fill: none; stroke: #3a3a3a; stroke-dasharray: 5 3; marker-end: url(#open); }
.solid path { fill: none; stroke: #3a3a3a; marker-end: url(#tri); }
.lbl text { font: 10.500px "Liberation Serif", serif; text-anchor: middle; }
.attr text { font: 10px Lato, "Open Sans", sans-serif; text-anchor: middle; }
.ent text { font: bold 14px "Liberation Serif", serif; text-anchor: middle; }
.rel text { font: bold 8px "Liberation Serif", serif; text-anchor: middle; }
.rel .rel-s { font-size: 7px; }
.scroll { width: 17px; margin-left: 178px; background: #f1f1f1; display: flex; flex-direction: column; align-items: center; padding: 7px 0; }
.scroll i { width: 13px; height: 20px; margin: 395px 0 133px; background: #c1c1c1; }

/* taskbar */
.taskbar { height: 48px; flex: none; background: #03020f; display: flex; color: #fff; font-size: 12px; }
.weather { width: 256px; padding: 5px 0 0 17px; display: flex; }
.weather svg { margin-top: 0; }
.weather > div { margin-left: 5px; line-height: 16px; padding-top: 3px; font-size: 11px; letter-spacing: .2px; }
.w-t { letter-spacing: 0; }
.w-s { color: #c8c8cc; }
.badge { font: 11px "Open Sans", sans-serif; fill: #2a1010; text-anchor: middle; }
.start { margin-top: 13px; }
.search { width: 220px; height: 32px; margin: 8px 0 0 12px; border-radius: 16px; background: #24232f; border: 1px solid #3c3b46; display: flex; align-items: center; padding-left: 11px; }
.search span { margin-left: 9px; width: 131px; color: #c9c9ce; letter-spacing: .3px; }
.apps { display: flex; margin-left: 4px; }
.app { width: 40px; height: 40px; margin: 4px 4px 0 0; border-radius: 4px; display: flex; flex-direction: column; align-items: center; padding-top: 8px; }
.app svg { width: 24px; height: 24px; }
.run::after { content: ""; width: 6px; height: 3px; border-radius: 2px; background: #8b8b92; margin-top: 4px; }
.active { background: #1b1a27; }
.active::after { width: 16px; background: #f87f64; }
.a-t { font: bold 12px "Open Sans", sans-serif; fill: #4b53bc; text-anchor: middle; }
.a-w { font: bold 11px "Open Sans", sans-serif; fill: #fff; text-anchor: middle; }
.tray { display: flex; align-items: center; margin-left: 66px; }
.t-wifi { margin-left: 18px; }
.t-vol { margin-left: 7px; }
.t-bat { margin-left: 9px; }
.clock { width: 70px; margin-left: 8px; text-align: right; font-size: 11px; letter-spacing: .3px; line-height: 16px; white-space: nowrap; }
.t-bell { margin-left: 8px; }
.t-cop { margin-left: 18px; }
.pre { font: bold 7px "Open Sans", sans-serif; text-anchor: middle; }
```
